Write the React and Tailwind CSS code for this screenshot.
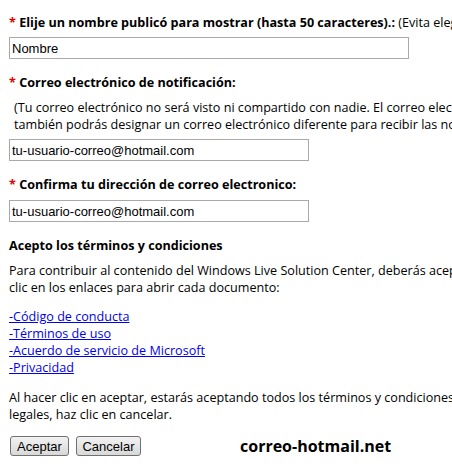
import React from "react";

const links = [
  "-Código de conducta",
  "-Términos de uso",
  "-Acuerdo de servicio de Microsoft",
  "-Privacidad",
];

function Label({ children, extra }) {
  return (
    <div className="whitespace-nowrap leading-[17px]">
      <span className="text-[#e00000] font-bold">*</span>{" "}
      <span className="font-bold">{children}</span>
      {extra && <span> {extra}</span>}
    </div>
  );
}

function Field({ value, width }) {
  return (
    <input
      readOnly
      value={value}
      className={`${width} h-[22px] border border-[#a9a9a9] bg-white px-[2px] text-[13px] text-black outline-none font-['Liberation_Sans',Arial,sans-serif]`}
    />
  );
}

export default function App() {
  return (
    <div className="w-[452px] h-[469px] overflow-hidden bg-white text-black text-[12.6px] font-['Open_Sans','Noto_Sans',sans-serif]">
      <div className="pl-[9px] pt-[14px] flex flex-col">
        <Label extra="(Evita elegir un nombre que te identifique)">
          Elije un nombre publicó para mostrar (hasta 50 caracteres).:
        </Label>
        <div className="mt-[6px]">
          <Field value="Nombre" width="w-[400px]" />
        </div>

        <div className="mt-[15px]">
          <Label>Correo electrónico de notificación:</Label>
        </div>
        <div className="mt-[8px] pl-[5px] whitespace-nowrap leading-[17px]">
          <div>
            (Tu correo electrónico no será visto ni compartido con nadie. El correo electrónico
          </div>
          <div>
            también podrás designar un correo electrónico diferente para recibir las notificaciones)
          </div>
        </div>
        <div className="mt-[6px]">
          <Field value="tu-usuario-correo@hotmail.com" width="w-[300px]" />
        </div>

        <div className="mt-[15px]">
          <Label>Confirma tu dirección de correo electronico:</Label>
        </div>
        <div className="mt-[7px]">
          <Field value="tu-usuario-correo@hotmail.com" width="w-[300px]" />
        </div>

        <div className="mt-[15px] font-bold leading-[17px] whitespace-nowrap">
          Acepto los términos y condiciones
        </div>
        <div className="mt-[8px] leading-[17px] whitespace-nowrap">
          <div>
            Para contribuir al contenido del Windows Live Solution Center, deberás aceptar los
          </div>
          <div>clic en los enlaces para abrir cada documento:</div>
        </div>

        <div className="mt-[12px] flex flex-col leading-[17px]">
          {links.map((l) => (
            <a key={l} href="#" className="text-[#0000ee] underline self-start">
              {l}
            </a>
          ))}
        </div>

        <div className="mt-[13px] leading-[17px] whitespace-nowrap">
          <div>
            Al hacer clic en aceptar, estarás aceptando todos los términos y condiciones
          </div>
          <div>legales, haz clic en cancelar.</div>
        </div>

        <div className="mt-[11px] flex items-center">
          <button className="ml-[1px] h-[20px] w-[59px] rounded-[3px] border border-[#707070] bg-gradient-to-b from-[#f2f2f2] to-[#d8d8d8] text-[13px] leading-none font-['Liberation_Sans',Arial,sans-serif]">
            Aceptar
          </button>
          <button className="ml-[7px] h-[20px] w-[65px] rounded-[3px] border border-[#707070] bg-gradient-to-b from-[#f2f2f2] to-[#d8d8d8] text-[13px] leading-none font-['Liberation_Sans',Arial,sans-serif]">
            Cancelar
          </button>
          <span className="ml-[99px] font-bold text-[16px] font-['Open_Sans',sans-serif]">
            correo-hotmail.net
          </span>
        </div>
      </div>
    </div>
  );
}
